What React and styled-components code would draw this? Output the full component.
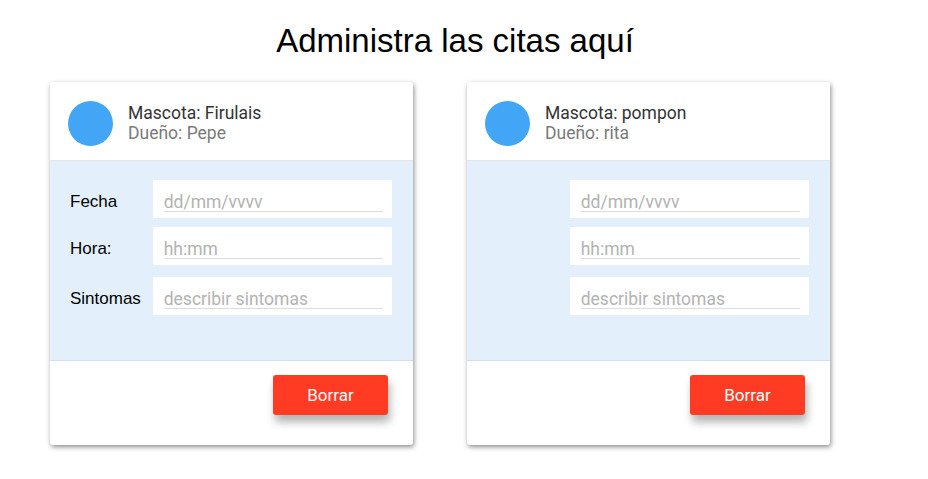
import React from "react";
import styled, { createGlobalStyle } from "styled-components";

const citas = [
  { id: 1, mascota: "Firulais", dueno: "Pepe", conLabels: true },
  { id: 2, mascota: "pompon", dueno: "rita", conLabels: false },
];

const campos = [
  { key: "fecha", label: "Fecha", placeholder: "dd/mm/vvvv", gap: 0 },
  { key: "hora", label: "Hora:", placeholder: "hh:mm", gap: 9 },
  { key: "sintomas", label: "Sintomas", placeholder: "describir sintomas", gap: 12 },
];

const App = () => {
  return (
    <>
      <GlobalStyle />
      <Page>
        <Title>Administra las citas aquí</Title>
        <CardRow>
          {citas.map((cita) => (
            <Card key={cita.id}>
              <CardHeader>
                <Avatar />
                <Info>
                  <Pet>Mascota: {cita.mascota}</Pet>
                  <Owner>Dueño: {cita.dueno}</Owner>
                </Info>
              </CardHeader>

              <CardBody>
                {campos.map((campo) => (
                  <FieldRow key={campo.key} $gap={campo.gap}>
                    <Label>{cita.conLabels ? campo.label : ""}</Label>
                    <InputBox>
                      <Input placeholder={campo.placeholder} />
                    </InputBox>
                  </FieldRow>
                ))}
              </CardBody>

              <CardFooter>
                <DeleteButton>Borrar</DeleteButton>
              </CardFooter>
            </Card>
          ))}
        </CardRow>
      </Page>
    </>
  );
};

export default App;

const GlobalStyle = createGlobalStyle`
  body {
    margin: 0;
    background: #ffffff;
    font-family: Roboto, "Liberation Sans", sans-serif;
  }
`;

const Page = styled.div`
  width: 928px;
  height: 479px;
  overflow: hidden;
`;

const Title = styled.h1`
  margin: 0;
  padding: 22px 18px 0 0;
  height: 60px;
  box-sizing: border-box;
  text-align: center;
  font-family: "Liberation Sans", Arial, sans-serif;
  font-size: 33px;
  font-weight: 400;
  line-height: 38px;
  color: #000;
`;

const CardRow = styled.div`
  display: flex;
  gap: 54px;
  padding: 22px 0 0 50px;
`;

const Card = styled.div`
  width: 363px;
  height: 363px;
  display: flex;
  flex-direction: column;
  background: #fff;
  border-radius: 3px;
  box-shadow: 1px 2px 5px rgba(0, 0, 0, 0.45);
  overflow: hidden;
`;

const CardHeader = styled.div`
  display: flex;
  align-items: center;
  gap: 15px;
  height: 79px;
  box-sizing: border-box;
  padding: 4px 18px 0;
  border-bottom: 1px solid #e6e6e6;
`;

const Avatar = styled.div`
  width: 45px;
  height: 45px;
  border-radius: 50%;
  background: #42a5f5;
  flex-shrink: 0;
`;

const Info = styled.div`
  display: flex;
  flex-direction: column;
  font-size: 17.5px;
  line-height: 20px;
`;

const Pet = styled.div`
  color: #333;
`;

const Owner = styled.div`
  color: #7a7a7a;
`;

const CardBody = styled.div`
  height: 200px;
  box-sizing: border-box;
  padding: 19px 21px 0 20px;
  background: #e3f0fb;
  border-bottom: 1px solid #d3e0ec;
`;

const FieldRow = styled.div`
  display: flex;
  align-items: center;
  margin-top: ${({ $gap }) => $gap}px;
`;

const Label = styled.div`
  width: 83px;
  padding-top: 6px;
  font-family: "Liberation Sans", Arial, sans-serif;
  font-size: 17px;
  color: #000;
`;

const InputBox = styled.div`
  width: 240px;
  height: 38px;
  box-sizing: border-box;
  padding: 0 9px 0 11px;
  background: #fff;
`;

const Input = styled.input`
  display: block;
  width: 100%;
  height: 32px;
  box-sizing: border-box;
  margin: 0;
  padding: 12px 0 0;
  border: none;
  border-bottom: 1px solid #dcdcdc;
  outline: none;
  background: transparent;
  font-family: Roboto, sans-serif;
  font-size: 17.5px;
  line-height: 19px;
  color: #333;

  &::placeholder {
    color: #b3b3b3;
  }
`;

const CardFooter = styled.div`
  flex: 1;
  display: flex;
  justify-content: flex-end;
  align-items: flex-start;
  padding: 14px 25px 0 0;
`;

const DeleteButton = styled.button`
  width: 115px;
  height: 40px;
  border: none;
  border-radius: 3px;
  background: #ff3b24;
  color: #fff;
  font-family: Roboto, sans-serif;
  font-size: 17px;
  cursor: pointer;
  box-shadow: 2px 7px 8px rgba(0, 0, 0, 0.3);
`;
